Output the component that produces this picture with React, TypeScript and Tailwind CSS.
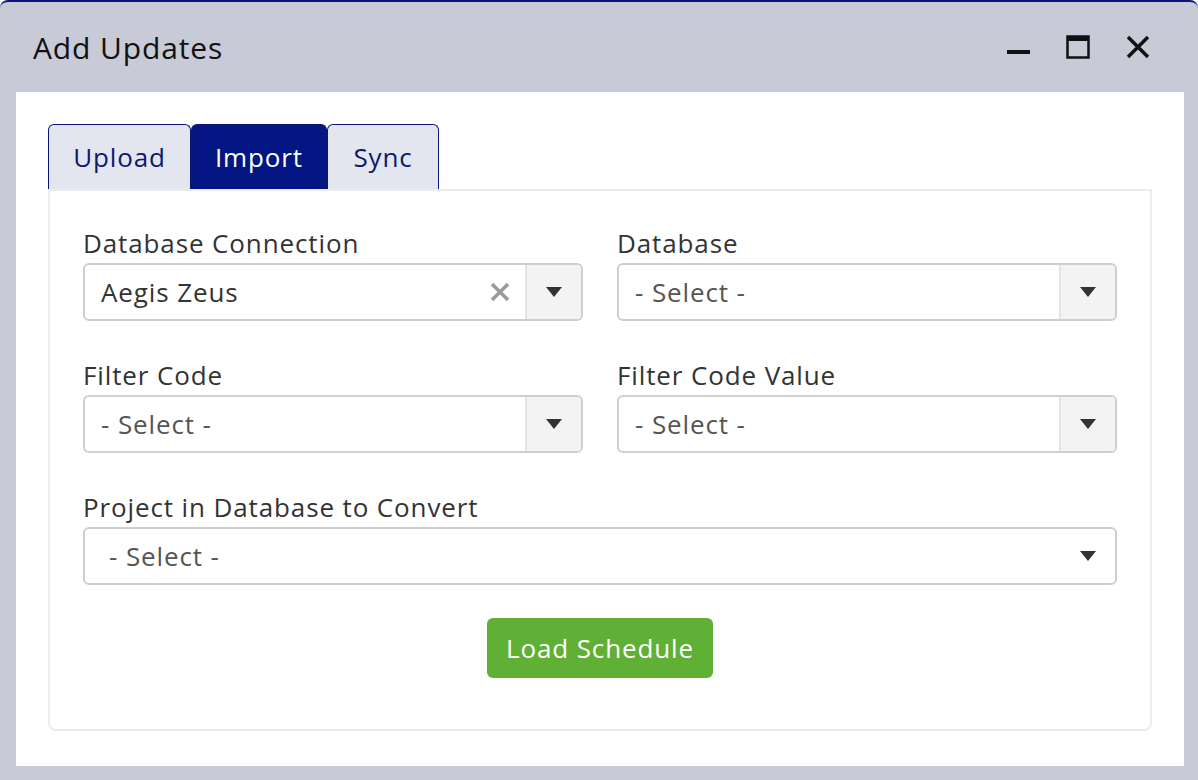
import React from 'react';

const Caret: React.FC = () => (
  <svg width="18" height="12" viewBox="0 0 18 12">
    <path d="M1 1 L17 1 L9 11 Z" fill="#333" />
  </svg>
);

interface SelectProps {
  value?: string;
  clearable?: boolean;
  plain?: boolean;
}

const Select: React.FC<SelectProps> = ({ value, clearable, plain }) => {
  const text = value ?? '- Select -';
  const color = value ? 'text-[#333]' : 'text-[#555]';
  if (plain) {
    return (
      <div className="flex h-[58px] items-center justify-between rounded-md border-2 border-[#cfcfcf] pl-6 pr-[18px]">
        <span className={`text-[26px] ${color}`}>{text}</span>
        <Caret />
      </div>
    );
  }
  return (
    <div className="flex h-[58px] overflow-hidden rounded-md border-2 border-[#cfcfcf]">
      <div className="flex flex-1 items-center pl-4">
        <span className={`flex-1 text-[26px] ${color}`}>{text}</span>
        {clearable && (
          <svg width="22" height="22" viewBox="0 0 22 22" className="mr-[14px]">
            <path d="M3 3 L19 19 M19 3 L3 19" stroke="#9a9a9a" strokeWidth="3.5" />
          </svg>
        )}
      </div>
      <div className="flex w-[56px] items-center justify-center border-l-2 border-[#e4e4e4] bg-[#f3f3f3]">
        <Caret />
      </div>
    </div>
  );
};

const Field: React.FC<{ label: string; children: React.ReactNode }> = ({ label, children }) => (
  <div className="flex flex-col">
    <label className="mb-[5px] text-[26px] leading-[30px] text-[#333]">{label}</label>
    {children}
  </div>
);

export default function App() {
  return (
    <div className="h-[780px] w-[1198px] bg-white font-['Open_Sans','Noto_Sans',sans-serif] tracking-[0.055em]">
      <div className="flex h-full flex-col rounded-t-lg border-t-2 border-[#0b1575] bg-[#c8cad7]">
        <div className="flex h-[90px] items-center justify-between pl-[33px] pr-[48px]">
          <h1 className="text-[30px] text-[#111]">Add Updates</h1>
          <div className="flex items-center gap-[36px]">
            <svg width="24" height="24" viewBox="0 0 24 24">
              <rect x="1" y="15" width="23" height="4" fill="#111" />
            </svg>
            <svg width="24" height="24" viewBox="0 0 24 24">
              <rect x="1.5" y="1.5" width="21" height="21" fill="none" stroke="#111" strokeWidth="2.5" />
              <rect x="1" y="1" width="22" height="5" fill="#111" />
            </svg>
            <svg width="24" height="24" viewBox="0 0 24 24">
              <path d="M2 2 L22 22 M22 2 L2 22" stroke="#111" strokeWidth="3.5" />
            </svg>
          </div>
        </div>
        <div className="mx-4 flex-1 bg-white px-8 pt-8 pb-[34px] mr-[14px]">
          <div className="flex h-[65px] items-end">
            <button className="h-[65px] w-[143px] rounded-t-md border border-b-0 border-[#0b1575] bg-[#e3e6ee] text-[26px] text-[#0d1a6b]">
              Upload
            </button>
            <button className="h-[65px] w-[136px] rounded-t-md border-2 border-b-0 border-[#0a1678] bg-[#041683] text-[26px] text-white">
              Import
            </button>
            <button className="h-[65px] w-[112px] rounded-t-md border border-b-0 border-[#0b1575] bg-[#e3e6ee] text-[26px] text-[#0d1a6b]">
              Sync
            </button>
          </div>
          <div className="flex h-[542px] flex-col rounded-b-lg border-2 border-[#ececec] px-[33px] pt-[37px]">
            <div className="grid grid-cols-2 gap-x-[34px] gap-y-[39px]">
              <Field label="Database Connection">
                <Select value="Aegis Zeus" clearable />
              </Field>
              <Field label="Database">
                <Select />
              </Field>
              <Field label="Filter Code">
                <Select />
              </Field>
              <Field label="Filter Code Value">
                <Select />
              </Field>
              <div className="col-span-2">
                <Field label="Project in Database to Convert">
                  <Select plain />
                </Field>
              </div>
            </div>
            <div className="mt-[33px] flex justify-center">
              <button className="h-[60px] w-[226px] rounded-md bg-[#5fb035] text-[26px] text-white">
                Load Schedule
              </button>
            </div>
          </div>
        </div>
        <div className="h-[14px]" />
      </div>
    </div>
  );
}
